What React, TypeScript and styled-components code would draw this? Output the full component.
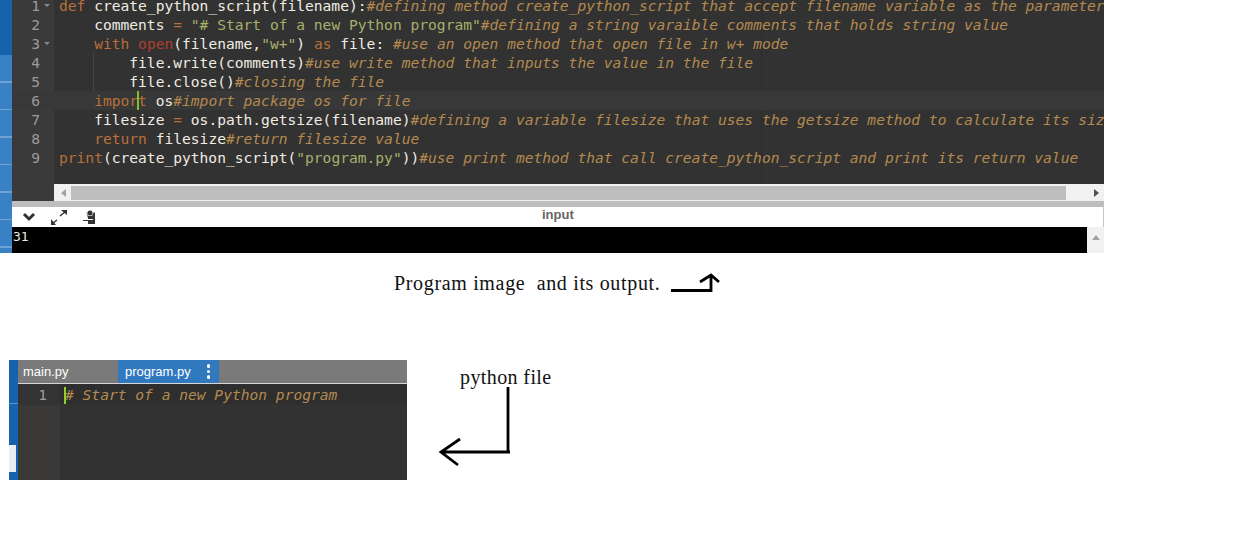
import styled, { createGlobalStyle } from "styled-components";

const GlobalStyle = createGlobalStyle`
    html, body {
        margin: 0;
        padding: 0;
        background: #fff;
    }
`;

type Tone = "plain" | "key" | "call" | "str" | "op" | "note";

const toneColors: Record<Tone, string> = {
    plain: "#f0ece2",
    key: "#b8703a",
    call: "#ad3f2e",
    str: "#a6b06a",
    op: "#b8703a",
    note: "#b48a50",
};

type Chunk = [Tone, string];

const programLines: Chunk[][] = [
    [["key", "def"], ["plain", " create_python_script(filename):"], ["note", "#defining method create_python_script that accept filename variable as the parameter"]],
    [["plain", "    comments "], ["op", "="], ["plain", " "], ["str", "\"# Start of a new Python program\""], ["note", "#defining a string varaible comments that holds string value"]],
    [["plain", "    "], ["key", "with"], ["plain", " "], ["call", "open"], ["plain", "(filename,"], ["str", "\"w+\""], ["plain", ") "], ["key", "as"], ["plain", " file: "], ["note", "#use an open method that open file in w+ mode"]],
    [["plain", "        file.write(comments)"], ["note", "#use write method that inputs the value in the file"]],
    [["plain", "        file.close()"], ["note", "#closing the file"]],
    [["plain", "    "], ["key", "import"], ["plain", " os"], ["note", "#import package os for file"]],
    [["plain", "    filesize "], ["op", "="], ["plain", " os.path.getsize(filename)"], ["note", "#defining a variable filesize that uses the getsize method to calculate its size"]],
    [["plain", "    "], ["key", "return"], ["plain", " filesize"], ["note", "#return filesize value"]],
    [["key", "print"], ["plain", "(create_python_script("], ["str", "\"program.py\""], ["plain", "))"], ["note", "#use print method that call create_python_script and print its return value"]],
];

const App = () => {
    return (
        <Page>
            <GlobalStyle />
            <TopSection>
                <SideStrip />
                <IdePane>
                    <EditorArea>
                        <Gutter>
                            {programLines.map((_, i) => (
                                <LineNumber key={i} $active={i === 5}>
                                    {i + 1}
                                    {(i === 0 || i === 2) && <FoldMark />}
                                </LineNumber>
                            ))}
                        </Gutter>
                        <CodeColumn>
                            {programLines.map((line, i) => (
                                <CodeLine key={i} $active={i === 5} $guide={i === 3 || i === 4}>
                                    {line.map(([tone, text], j) => (
                                        <Token key={j} $tone={tone}>
                                            {text}
                                        </Token>
                                    ))}
                                    {i === 5 && <Caret />}
                                </CodeLine>
                            ))}
                        </CodeColumn>
                    </EditorArea>
                    <ScrollRow>
                        <GutterFill />
                        <ScrollTrack>
                            <ArrowLeft />
                            <ScrollThumb />
                            <ArrowRight />
                        </ScrollTrack>
                    </ScrollRow>
                    <ToolBar>
                        <ToolIcons>
                            <svg width="14" height="10" viewBox="0 0 14 10">
                                <path d="M2 2l5 5 5-5" fill="none" stroke="#333" strokeWidth="3" />
                            </svg>
                            <svg width="16" height="15" viewBox="0 0 16 15">
                                <path d="M9 6l5-4M1 14l5-4" stroke="#333" strokeWidth="1.5" fill="none" />
                                <path d="M10 0h6v5zM0 9l5 6H0z" fill="#333" />
                            </svg>
                            <svg width="14" height="15" viewBox="0 0 14 15">
                                <circle cx="8" cy="3" r="2.6" fill="#333" />
                                <path d="M4 2l2 4h4l2-4 1 1v11H6v-3H1v-1h5V8z" fill="#333" />
                                <path d="M6 9h5v1H6z" fill="#fff" />
                            </svg>
                        </ToolIcons>
                        <InputLabel>input</InputLabel>
                    </ToolBar>
                    <OutputRow>
                        <OutputText>31</OutputText>
                        <OutputScroll>
                            <ArrowUp />
                        </OutputScroll>
                    </OutputRow>
                </IdePane>
            </TopSection>
            <Caption>
                <span>Program image&nbsp; and its output.</span>
                <svg width="50" height="20" viewBox="0 0 50 20">
                    <path d="M0 17.5h41M40 19V3M29 9l11-7 8 7" fill="none" stroke="#000" strokeWidth="2.8" />
                </svg>
            </Caption>
            <BottomSection>
                <FilePane>
                    <FileStrip>
                        <StripChip />
                    </FileStrip>
                    <FileMain>
                        <TabBar>
                            <Tab>main.py</Tab>
                            <Tab $selected>
                                program.py
                                <TabMenu>
                                    <i />
                                    <i />
                                    <i />
                                </TabMenu>
                            </Tab>
                        </TabBar>
                        <FileBody>
                            <FileGutter>
                                <FileLineNumber>1</FileLineNumber>
                            </FileGutter>
                            <FileCode>
                                <FileCaret />
                                # Start of a new Python program
                            </FileCode>
                        </FileBody>
                    </FileMain>
                </FilePane>
                <Annotation>
                    <AnnotationText>python file</AnnotationText>
                    <AnnotationArrow width="76" height="80" viewBox="0 0 76 80">
                        <path d="M70 0v66M72 65H3M22 52L3 65l17 13" fill="none" stroke="#000" strokeWidth="2.8" />
                    </AnnotationArrow>
                </Annotation>
            </BottomSection>
        </Page>
    );
};

export default App;

const Page = styled.div`
    width: 1239px;
    height: 547px;
    overflow: hidden;
    background: #fff;
`;

const TopSection = styled.section`
    display: flex;
    width: 1104px;
    height: 253px;
`;

const SideStrip = styled.div`
    width: 12px;
    background: linear-gradient(#1563ad 0, #1563ad 55px, transparent 55px),
        repeating-linear-gradient(#3a80c4 0, #3a80c4 26px, #6fa3d6 26px, #6fa3d6 27.5px);
`;

const IdePane = styled.div`
    flex: 1;
    min-width: 0;
    display: flex;
    flex-direction: column;
`;

const EditorArea = styled.div`
    height: 184px;
    display: flex;
    overflow: hidden;
    background: #323232;
    font-family: "DejaVu Sans Mono", monospace;
    font-size: 14.6px;
    line-height: 19px;
`;

const Gutter = styled.div`
    width: 42px;
    flex: none;
    margin-top: -4px;
    margin-bottom: -4px;
    background: #3a3a3a;
`;

const LineNumber = styled.div<{ $active?: boolean }>`
    position: relative;
    height: 19px;
    padding-right: 14px;
    text-align: right;
    font-size: 14.6px;
    color: #9c9c9c;
    background: ${(p) => (p.$active ? "#383838" : "transparent")};
`;

const FoldMark = styled.span`
    position: absolute;
    top: 8px;
    right: 4px;
    border-left: 3px solid transparent;
    border-right: 3px solid transparent;
    border-top: 3px solid #8a8a8a;
`;

const CodeColumn = styled.div`
    flex: 1;
    min-width: 0;
    margin-top: -4px;
    background: linear-gradient(#2c2c2c, #2c2c2c) 707px 0 / 1px 100% no-repeat;
`;

const CodeLine = styled.div<{ $active?: boolean; $guide?: boolean }>`
    position: relative;
    height: 19px;
    padding-left: 5px;
    white-space: pre;
    background: ${(p) =>
        p.$active
            ? "#383838"
            : p.$guide
              ? "linear-gradient(#444, #444) 39px 0 / 1px 100% no-repeat"
              : "transparent"};
`;

const Token = styled.span<{ $tone: Tone }>`
    color: ${(p) => toneColors[p.$tone]};
    font-style: ${(p) => (p.$tone === "note" ? "italic" : "normal")};
`;

const Caret = styled.i`
    position: absolute;
    left: 83px;
    top: 0;
    width: 2px;
    height: 19px;
    background: #7fbf2a;
`;

const ScrollRow = styled.div`
    display: flex;
    height: 17px;
    background: #323232;
`;

const GutterFill = styled.div`
    width: 42px;
    background: #3a3a3a;
`;

const ScrollTrack = styled.div`
    flex: 1;
    display: flex;
    align-items: center;
    gap: 5px;
    padding: 0 5px 0 7px;
    background: #f1f1f1;
`;

const ScrollThumb = styled.div`
    flex: 1;
    height: 14px;
    background: #bdbdbd;
    margin-right: 23px;
`;

const ArrowLeft = styled.span`
    width: 0;
    height: 0;
    border-top: 4px solid transparent;
    border-bottom: 4px solid transparent;
    border-right: 5px solid #a3a3a3;
`;

const ArrowRight = styled.span`
    width: 0;
    height: 0;
    border-top: 4px solid transparent;
    border-bottom: 4px solid transparent;
    border-left: 5px solid #505050;
`;

const ArrowUp = styled.span`
    width: 0;
    height: 0;
    border-left: 4px solid transparent;
    border-right: 4px solid transparent;
    border-bottom: 5px solid #a3a3a3;
`;

const ToolBar = styled.div`
    height: 26px;
    box-sizing: border-box;
    display: flex;
    align-items: center;
    background: #fff;
    border-top: 6px solid #bdbdbd;
    border-right: 1px solid #c4c4c4;
`;

const ToolIcons = styled.div`
    width: 530px;
    flex: none;
    box-sizing: border-box;
    display: flex;
    align-items: center;
    gap: 15px;
    padding: 0 0 0 10px;
`;

const InputLabel = styled.div`
    margin-top: -6px;
    font: bold 13px "Liberation Sans", Arial, sans-serif;
    color: #666;
`;

const OutputRow = styled.div`
    height: 26px;
    display: flex;
`;

const OutputText = styled.div`
    flex: 1;
    padding-left: 1px;
    background: #000;
    color: #e8e8e8;
    font: 13px/20px "DejaVu Sans Mono", monospace;
`;

const OutputScroll = styled.div`
    width: 17px;
    display: flex;
    justify-content: center;
    padding-top: 8px;
    box-sizing: border-box;
    background: #f1f1f1;
`;

const Caption = styled.div`
    display: flex;
    align-items: center;
    gap: 11px;
    height: 40px;
    margin-top: 10px;
    padding-left: 394px;
    font: 20px "Liberation Serif", "Times New Roman", serif;
    letter-spacing: 0.66px;
    color: #111;
`;

const BottomSection = styled.section`
    display: flex;
    margin-top: 57px;
    padding-left: 9px;
`;

const FilePane = styled.div`
    width: 398px;
    height: 120px;
    display: flex;
`;

const FileStrip = styled.div`
    position: relative;
    width: 9px;
    background: linear-gradient(#5b93cc, #5b93cc) 0 43px / 100% 1px no-repeat, #1563ad;
`;

const StripChip = styled.div`
    position: absolute;
    left: 0;
    top: 85px;
    width: 7px;
    height: 27px;
    background: #e9eef3;
`;

const FileMain = styled.div`
    flex: 1;
    display: flex;
    flex-direction: column;
    background: #323232;
`;

const TabBar = styled.div`
    height: 24px;
    box-sizing: border-box;
    display: flex;
    background: #7a7a7a;
    border-bottom: 1px solid #d6d6d6;
`;

const Tab = styled.div<{ $selected?: boolean }>`
    width: ${(p) => (p.$selected ? "101px" : "100px")};
    box-sizing: border-box;
    display: flex;
    align-items: center;
    justify-content: space-between;
    padding: 0 ${(p) => (p.$selected ? "9px 0 7px" : "5px")};
    font: 13px "Liberation Sans", Arial, sans-serif;
    color: #fff;
    background: ${(p) => (p.$selected ? "#3079bf" : "transparent")};
`;

const TabMenu = styled.span`
    display: flex;
    flex-direction: column;
    gap: 2px;

    i {
        width: 3.5px;
        height: 3.5px;
        border-radius: 50%;
        background: #fff;
    }
`;

const FileBody = styled.div`
    flex: 1;
    display: flex;
    font: 14.6px/20px "DejaVu Sans Mono", monospace;
`;

const FileGutter = styled.div`
    width: 42px;
    background: #3a3937;
`;

const FileLineNumber = styled.div`
    height: 20px;
    padding-top: 1px;
    padding-right: 13px;
    text-align: right;
    color: #9c9c9c;
    background: #333;
`;

const FileCode = styled.div`
    position: relative;
    flex: 1;
    height: 20px;
    padding: 1px 0 0 5px;
    box-sizing: border-box;
    font-style: italic;
    color: #b48a50;
    background: #2e2e2e;
`;

const FileCaret = styled.i`
    position: absolute;
    left: 4px;
    top: 3px;
    width: 2px;
    height: 17px;
    background: #8fd02a;
`;

const Annotation = styled.div`
    margin-left: 53px;
    margin-top: 6px;
    display: flex;
    flex-direction: column;
    align-items: flex-start;
    width: 113px;
`;

const AnnotationText = styled.div`
    font: 20px "Liberation Serif", "Times New Roman", serif;
    letter-spacing: 0.4px;
    color: #111;
`;

const AnnotationArrow = styled.svg`
    margin: -2px 0 0 -22px;
`;
